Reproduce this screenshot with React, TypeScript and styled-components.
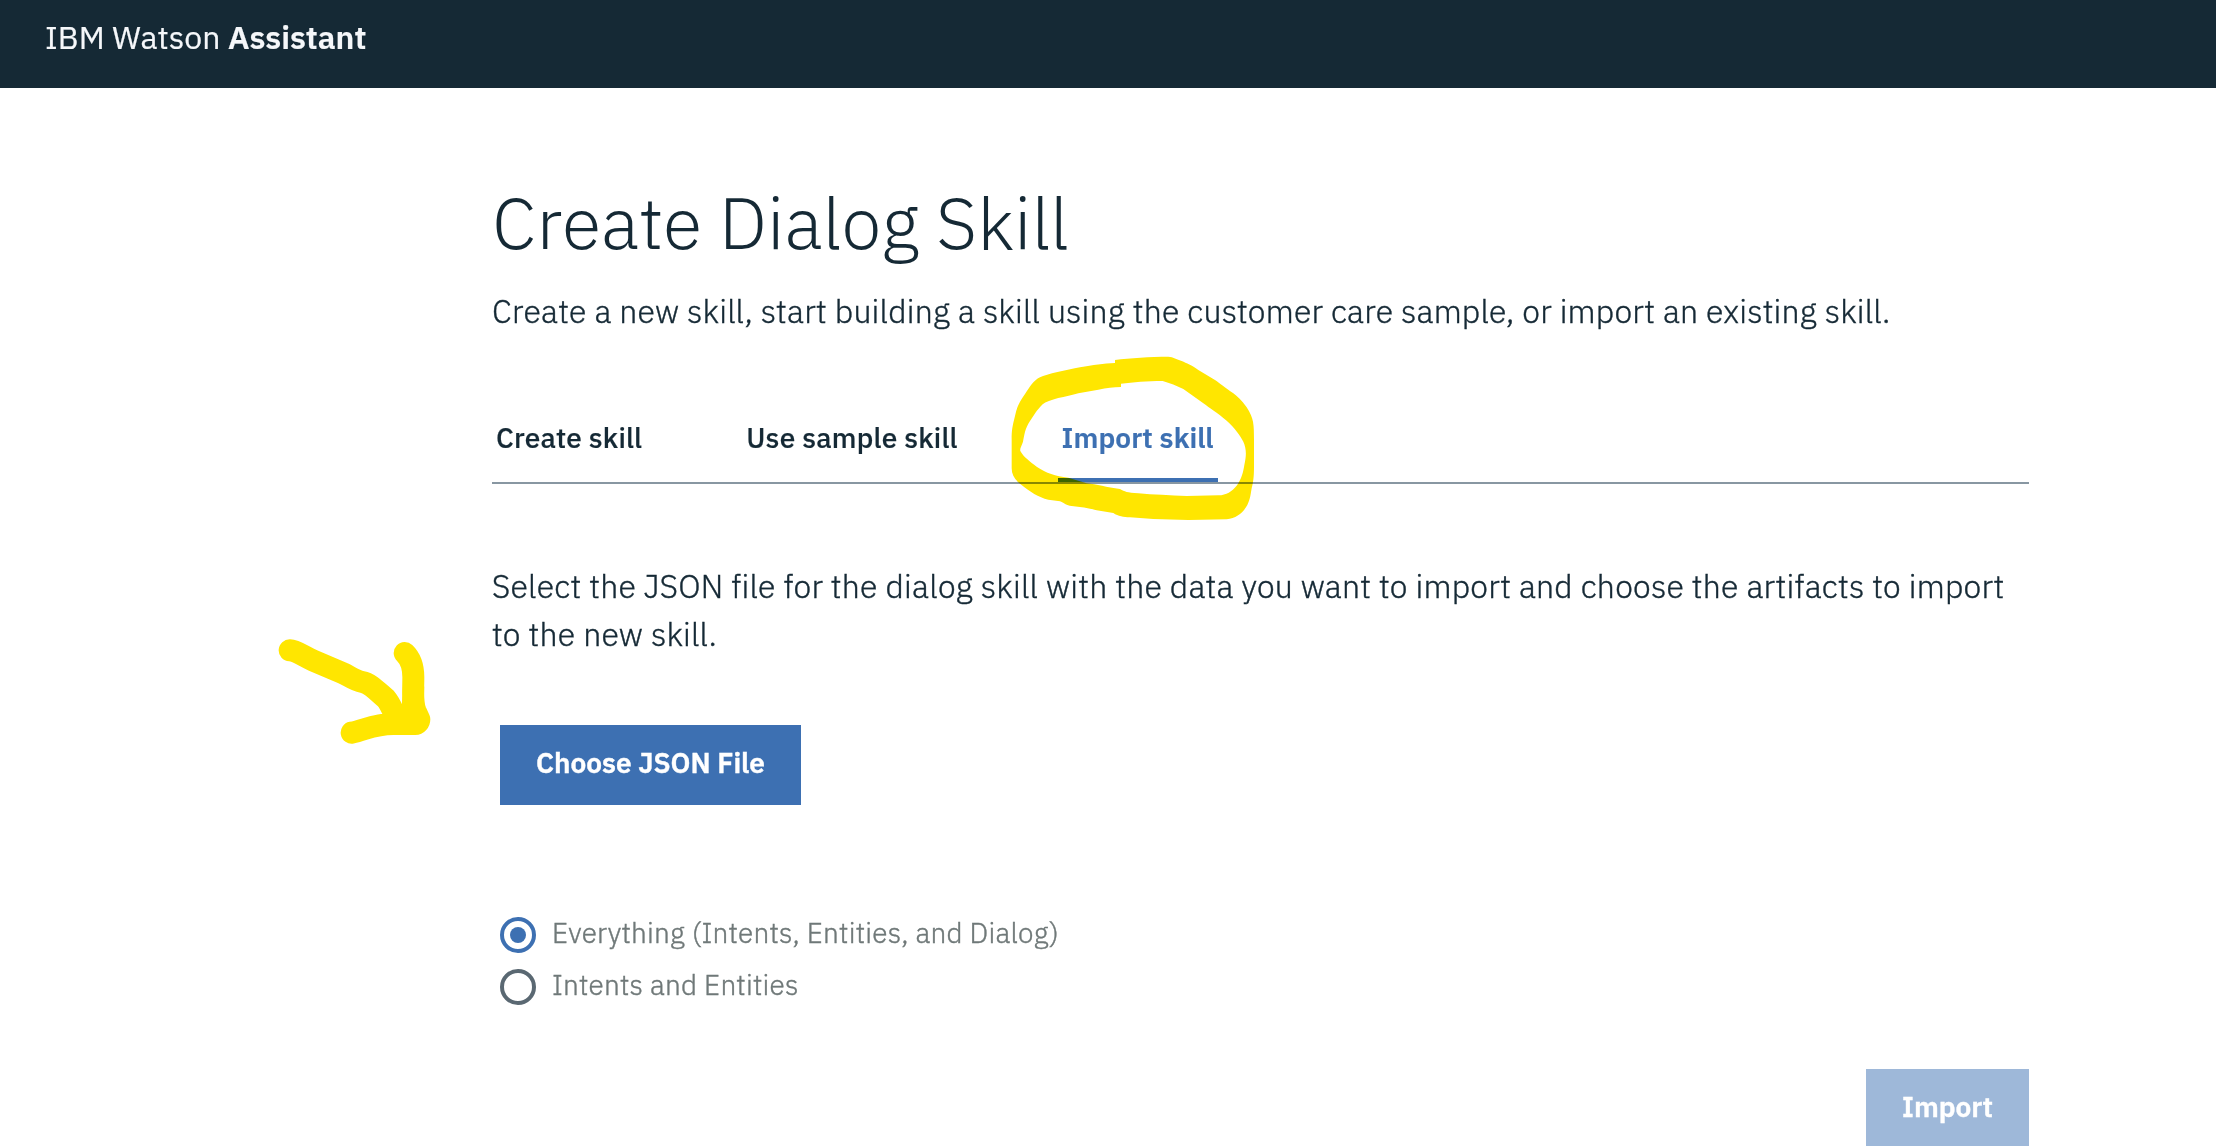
import React, { useState } from 'react';
import styled, { createGlobalStyle } from 'styled-components';

const ink = '#152935';
const blue = '#3d70b2';
const marker = '#ffe600';

const GlobalStyle = createGlobalStyle`
  * { box-sizing: border-box; }
  body {
    margin: 0;
    background: #fff;
    color: ${ink};
    font-family: "IBM Plex Sans", "Open Sans", "Noto Sans", sans-serif;
  }
`;

const Page = styled.div`
  position: relative;
  height: 1146px;
  overflow: hidden;
`;

const Header = styled.header`
  height: 88px;
  padding-left: 45px;
  background: ${ink};
  color: #f5f7fa;
  font-size: 32px;
  line-height: 74px;
  -webkit-text-stroke: 0.2px currentColor;
`;

const Product = styled.span`
  font-weight: 600;
`;

const Main = styled.main`
  display: flex;
  flex-direction: column;
  width: 1537px;
  margin-left: 492px;
  padding-top: 89px;
`;

const Title = styled.h1`
  margin: 0;
  font-size: 72px;
  font-weight: 300;
  line-height: 90px;
`;

const Copy = styled.p<{ $top: number; $tracking: number }>`
  margin: ${(p) => p.$top}px 0 0;
  font-size: 32px;
  font-weight: 300;
  line-height: 48px;
  letter-spacing: ${(p) => p.$tracking}px;
  -webkit-text-stroke: 0.4px currentColor;
`;

const Tabs = styled.nav`
  display: flex;
  gap: 96px;
  margin-top: 82px;
  border-bottom: 2px solid #8897a2;
`;

const Tab = styled.button<{ $active: boolean }>`
  height: 65px;
  padding: 0 4px 20px;
  border: 0;
  border-bottom: 4px solid ${(p) => (p.$active ? blue : 'transparent')};
  background: none;
  color: ${(p) => (p.$active ? blue : ink)};
  font: ${(p) => (p.$active ? 600 : 500)} 28px/41px "IBM Plex Sans", "Open Sans", sans-serif;
  letter-spacing: ${(p) => (p.$active ? 0.08 : 0.2)}px;
  -webkit-text-stroke: 0.2px currentColor;
`;

const Button = styled.button`
  height: 80px;
  padding: 0 36px 5px;
  border: 0;
  background: ${blue};
  color: #fff;
  font: 600 28px/75px "IBM Plex Sans", "Open Sans", sans-serif;
  -webkit-text-stroke: 0.4px currentColor;
  &:disabled { background: #9eb8d9; }
`;

const FileButton = styled(Button)`
  align-self: flex-start;
  width: 301px;
  margin: 67px 0 0 8px;
`;

const ImportButton = styled(Button)`
  align-self: flex-end;
  width: 163px;
  margin-top: 64px;
`;

const Options = styled.div`
  display: flex;
  flex-direction: column;
  gap: 16px;
  margin: 112px 0 0 8px;
`;

const Option = styled.div`
  display: flex;
  gap: 16px;
  height: 36px;
  color: #6f7878;
  font-size: 28px;
  font-weight: 300;
  line-height: 31px;
  letter-spacing: 0.22px;
  -webkit-text-stroke: 0.4px currentColor;
`;

const Radio = styled.span<{ $checked: boolean }>`
  display: grid;
  place-items: center;
  width: 36px;
  height: 36px;
  border: 4px solid ${(p) => (p.$checked ? blue : '#5a6872')};
  border-radius: 50%;
  &::after {
    content: '';
    width: 16px;
    height: 16px;
    border-radius: 50%;
    background: ${(p) => (p.$checked ? blue : 'transparent')};
  }
`;

const Mark = styled.svg<{ $x: number; $y: number }>`
  position: absolute;
  left: ${(p) => p.$x}px;
  top: ${(p) => p.$y}px;
  mix-blend-mode: multiply;
  pointer-events: none;
`;

const tabs = ['Create skill', 'Use sample skill', 'Import skill'];
const options = ['Everything (Intents, Entities, and Dialog)', 'Intents and Entities'];

export default function App() {
  const [tab, setTab] = useState(2);
  const [choice, setChoice] = useState(0);
  return (
    <Page>
      <GlobalStyle />
      <Header>
        IBM Watson <Product>Assistant</Product>
      </Header>
      <Main>
        <Title>Create Dialog Skill</Title>
        <Copy $top={20} $tracking={0.22}>
          Create a new skill, start building a skill using the customer care sample, or import an existing skill.
        </Copy>
        <Tabs>
          {tabs.map((label, i) => (
            <Tab key={label} $active={i === tab} onClick={() => setTab(i)}>
              {label}
            </Tab>
          ))}
        </Tabs>
        <Copy $top={78} $tracking={0.24}>
          Select the JSON file for the dialog skill with the data you want to import and choose the artifacts to import
          to the new skill.
        </Copy>
        <FileButton>Choose JSON File</FileButton>
        <Options role="radiogroup">
          {options.map((label, i) => (
            <Option key={label} role="radio" aria-checked={i === choice} onClick={() => setChoice(i)}>
              <Radio $checked={i === choice} />
              {label}
            </Option>
          ))}
        </Options>
        <ImportButton disabled>Import</ImportButton>
      </Main>
      <Mark $x={980} $y={340} width="300" height="190" viewBox="0 0 900 570" aria-hidden="true">
        <path
          fill={marker}
          fillRule="evenodd"
          d="M405 60V69C370 70 340 75 300 82C260 90 200 102 180 112C160 122 150 140 135 162C115 190 110 205 105 228C97 260 95 270 95 300V385C95 405 105 420 122 433C150 455 175 473 205 479L240 484C255 490 258 497 275 498C300 500 330 505 350 511L400 519C415 529 430 531 450 532L520 537L625 540L740 538C770 535 790 517 802 495C812 475 812 460 815 445C820 425 822 410 822 380V300C822 255 822 235 800 202C785 182 772 168 760 160C735 143 720 130 705 120L655 90C635 75 620 70 605 63C590 58 580 51 565 50C510 50 450 54 405 60Z M423 131V141C400 141 380 144 355 149L295 160C260 170 205 178 188 193C170 210 160 230 150 243C135 265 133 285 129 305C125 318 119 325 121 333C130 350 150 365 170 380C200 400 225 407 265 413L320 430C350 433 380 442 420 447C435 455 440 458 475 460C520 464 570 466 620 468L715 466C740 465 755 455 770 437C785 417 790 395 793 375C800 345 799 325 790 305C780 285 765 265 740 242C710 217 690 205 670 190L610 147C590 137 570 130 548 123C500 123 460 127 423 131Z"
        />
      </Mark>
      <Mark $x={260} $y={620} width="200" height="140" viewBox="0 0 600 420" aria-hidden="true">
        <path
          fill="none"
          stroke={marker}
          strokeWidth="66"
          strokeLinecap="round"
          strokeLinejoin="round"
          d="M89 91C110 92 130 109 160 122L250 160C270 170 285 182 307 186C330 190 350 212 378 236C392 252 398 272 412 300M434 99C455 119 460 150 460 172C460 215 456 248 467 274L478 298C478 306 472 312 466 312H400C340 312 316 330 275 338M460 200L458 300"
        />
      </Mark>
    </Page>
  );
}
